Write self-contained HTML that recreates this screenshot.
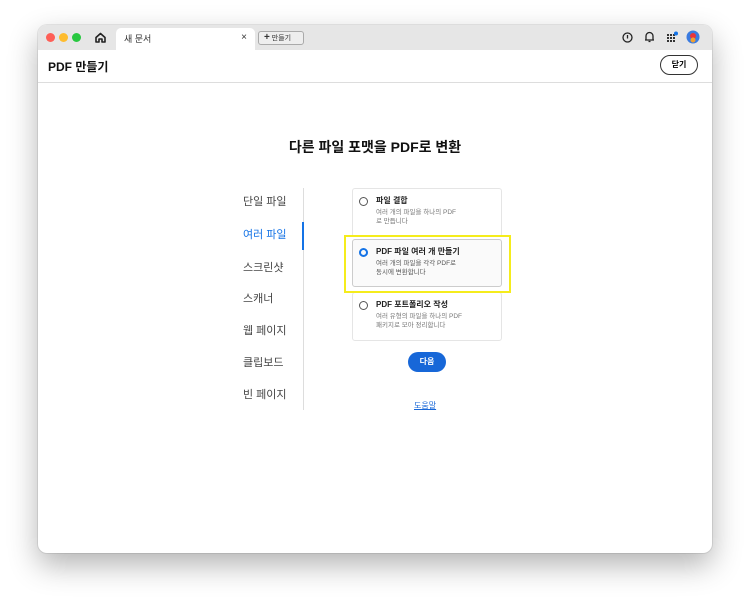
<!DOCTYPE html>
<html><head><meta charset="utf-8"><style>
*{margin:0;padding:0;box-sizing:border-box}
body{width:750px;height:604px;background:#fff;font-family:"Liberation Sans","Noto Sans CJK KR",sans-serif;position:relative;overflow:hidden}
.win{position:absolute;left:38px;top:25px;width:674px;height:528px;background:#fff;border-radius:9px;box-shadow:0 12px 30px rgba(0,0,0,.3),0 0 0 1px rgba(0,0,0,.08);overflow:hidden}
.tabbar{position:absolute;left:0;top:0;width:100%;height:25px;background:#e6e6e6}
.dot{position:absolute;top:8px;width:9px;height:9px;border-radius:50%}
.tab{position:absolute;left:78px;top:3px;width:139px;height:22px;background:#fff;border-radius:5px 5px 0 0;font-size:9px;color:#333;padding:4px 0 0 8px}
.new{position:absolute;left:220px;top:6px;width:46px;height:14px;border:1px solid #aaa;border-radius:3px;background:#eee;font-size:7px;color:#333;padding:1px 0 0 5px}
.hdr{position:absolute;left:0;top:25px;width:100%;height:33px;border-bottom:1px solid #ddd}
.abs{position:absolute}
.menu{position:absolute;left:205px;font-size:11px;color:#444}
.card{position:absolute;left:314px;width:150px;border:1px solid #e5e5e5;border-radius:3px;background:#fff}
.card b{position:absolute;left:23px;top:6px;font-size:8px;color:#222}
.card span{position:absolute;left:23px;top:19px;font-size:6.5px;color:#777;line-height:9px;width:120px}
.radio{position:absolute;left:6px;top:8px;width:9px;height:9px;border:1.5px solid #555;border-radius:50%}
</style></head><body>
<div class="win">
<div class="tabbar">
<div class="dot" style="left:8px;background:#fe5f57"></div>
<div class="dot" style="left:21px;background:#febc2e"></div>
<div class="dot" style="left:34px;background:#28c840"></div>
<svg class="abs" style="left:56px;top:6px" width="13" height="13" viewBox="0 0 13 13"><path d="M2 6.5L6.5 2.5L11 6.5V11H8V8H5V11H2Z" fill="none" stroke="#222" stroke-width="1.6" stroke-linejoin="round"/></svg>
<div class="tab">새 문서<span style="position:absolute;right:8px;top:4px;font-size:10px">×</span></div>
<div class="new"><b style="font-size:10px;line-height:10px">+</b> 만들기</div>
<svg class="abs" style="left:584px;top:7px" width="11" height="11"><circle cx="5.5" cy="5.5" r="4.5" fill="none" stroke="#222" stroke-width="1.3"/><path d="M5.5 3V6.5" stroke="#222" stroke-width="1.3"/></svg>
<svg class="abs" style="left:606px;top:6px" width="11" height="12"><path d="M2 9V5A3.5 3.5 0 0 1 9 5V9Z M1 9H10 M4.5 10.5H6.5" fill="none" stroke="#222" stroke-width="1.3"/></svg>
<svg class="abs" style="left:628px;top:6px" width="12" height="12"><g fill="#333"><rect x="1" y="3" width="2" height="2"/><rect x="4" y="3" width="2" height="2"/><rect x="7" y="3" width="2" height="2"/><rect x="1" y="6" width="2" height="2"/><rect x="4" y="6" width="2" height="2"/><rect x="7" y="6" width="2" height="2"/><rect x="1" y="9" width="2" height="2"/><rect x="4" y="9" width="2" height="2"/><rect x="7" y="9" width="2" height="2"/></g><circle cx="10" cy="2.5" r="2" fill="#1473e6"/></svg>
<svg class="abs" style="left:648px;top:5px" width="14" height="14"><circle cx="7" cy="7" r="6.5" fill="#3a7be0"/><circle cx="7" cy="6" r="3" fill="#e8353b"/><circle cx="7" cy="10" r="2.5" fill="#f0a030"/></svg>
</div>
<div class="hdr">
<div class="abs" style="left:10px;top:8px;font-size:12px;font-weight:bold;color:#111">PDF 만들기</div>
<div class="abs" style="left:622px;top:5px;width:38px;height:20px;border:1.5px solid #333;border-radius:10px;font-size:8px;font-weight:bold;text-align:center;line-height:17px">닫기</div>
</div>
<div class="abs" style="left:0;width:674px;top:112px;text-align:center;font-size:14px;font-weight:bold;color:#111">다른 파일 포맷을 PDF로 변환</div>
<div class="menu" style="top:168px">단일 파일</div>
<div class="menu" style="top:201px;color:#1473e6">여러 파일</div>
<div class="menu" style="top:234px">스크린샷</div>
<div class="menu" style="top:265px">스캐너</div>
<div class="menu" style="top:297px">웹 페이지</div>
<div class="menu" style="top:329px">클립보드</div>
<div class="menu" style="top:361px">빈 페이지</div>
<div class="abs" style="left:265px;top:163px;width:1px;height:222px;background:#ddd"></div>
<div class="abs" style="left:264px;top:197px;width:2px;height:28px;background:#1473e6"></div>
<div class="card" style="top:163px;height:49px"><div class="radio"></div><b>파일 결합</b><span>여러 개의 파일을 하나의 PDF<br>로 만듭니다</span></div>
<div class="card" style="top:267px;height:49px"><div class="radio"></div><b>PDF 포트폴리오 작성</b><span>여러 유형의 파일을 하나의 PDF<br>패키지로 모아 정리합니다</span></div>
<div class="abs" style="left:306px;top:210px;width:167px;height:58px;border:2px solid #f5ec1c"></div>
<div class="card" style="top:214px;height:48px;border-color:#ccc;background:#fafafa"><div class="radio" style="border:2.5px solid #1473e6;width:9px;height:9px"></div><b>PDF 파일 여러 개 만들기</b><span style="color:#555">여러 개의 파일을 각각 PDF로<br>동시에 변환합니다</span></div>
<div class="abs" style="left:370px;top:327px;width:38px;height:20px;border-radius:10px;background:#1767d8;color:#fff;font-size:8px;font-weight:bold;text-align:center;line-height:20px">다음</div>
<div class="abs" style="left:376px;top:375px;font-size:8px;color:#1767d8;text-decoration:underline">도움말</div>
</div>
</body></html>
